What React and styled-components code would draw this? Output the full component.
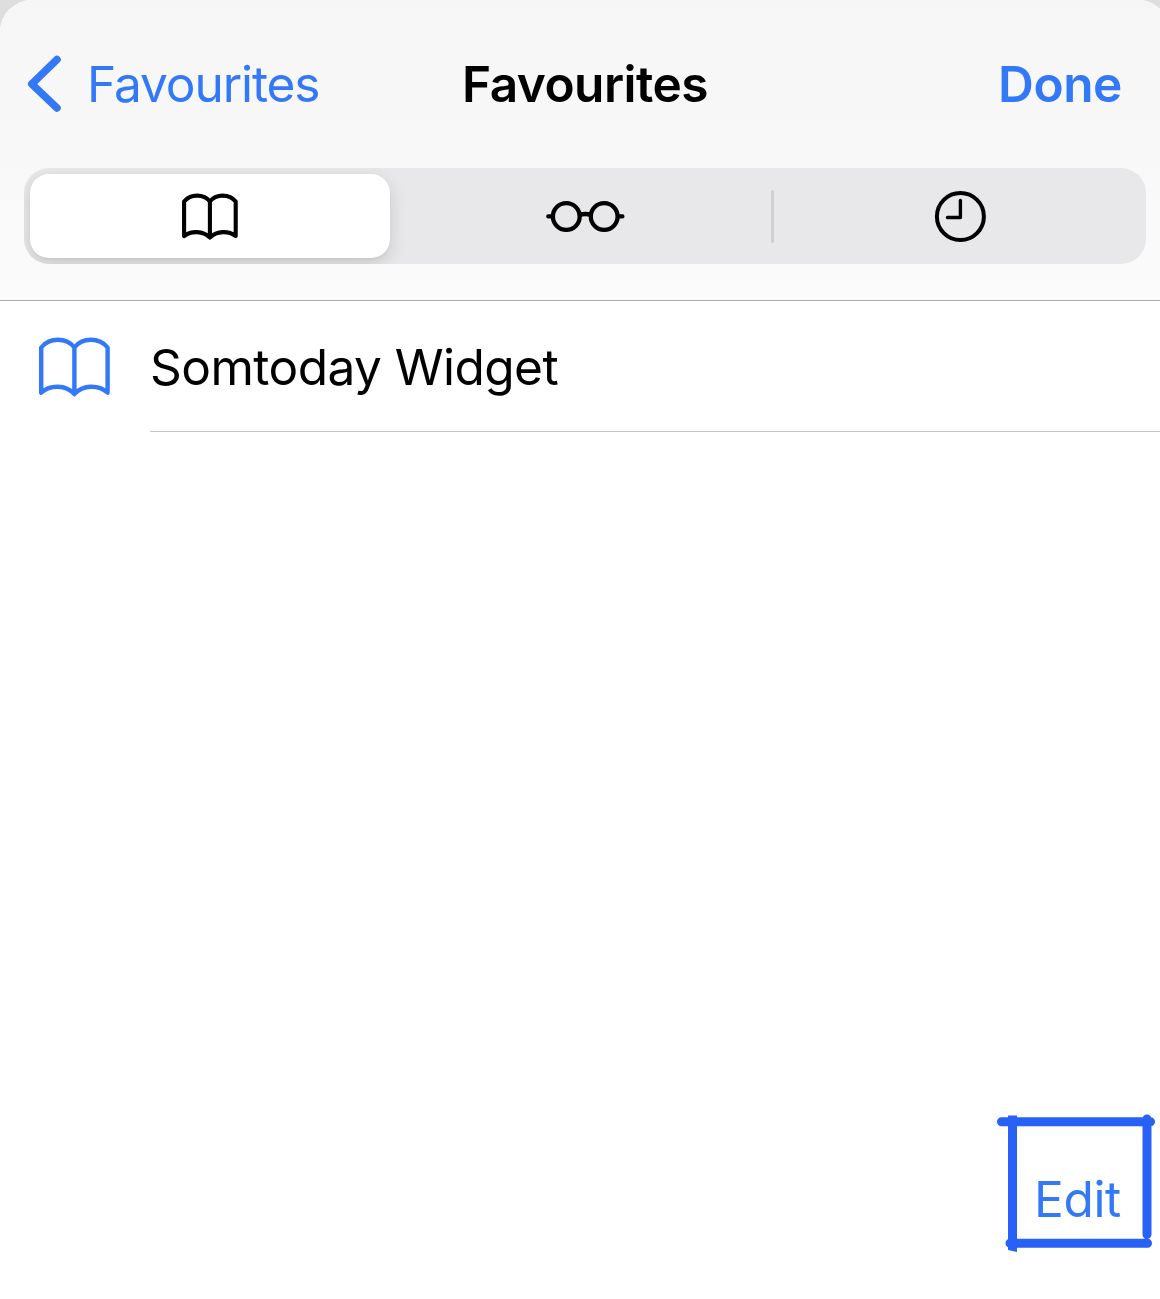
import React from "react";
import styled, { createGlobalStyle } from "styled-components";

const BLUE = "#3379f7";

const Global = createGlobalStyle`
  html, body { margin: 0; background: #dededf; overflow: hidden; }
  *, *::before, *::after { box-sizing: border-box; }
`;

const Screen = styled.div`
  width: 1160px;
  height: 1299px;
  overflow: hidden;
  font-family: Inter, "Liberation Sans", sans-serif;
  font-size: 49.6px;
  line-height: 60px;
  color: #000;
`;

const Sheet = styled.div`
  width: 1170px;
  height: 1299px;
  display: flex;
  flex-direction: column;
  background: #fff;
  border-radius: 32px 32px 0 0;
  overflow: hidden;
`;

const Header = styled.header`
  height: 301px;
  flex: none;
  background: linear-gradient(#f6f6f6, #f8f8f8 50%, #fbfbfb);
  border-bottom: 1px solid #adadaf;
`;

const NavBar = styled.nav`
  height: 168px;
  display: grid;
  grid-template-columns: 1fr auto 1fr;
  align-items: center;
  padding: 0 26px;
`;

const TextButton = styled.button`
  appearance: none;
  border: 0;
  padding: 0;
  background: none;
  font: inherit;
  font-weight: ${(p) => (p.$strong ? 600 : 400)};
  letter-spacing: ${(p) => p.$tracking || "0"};
  color: ${BLUE};
  display: flex;
  align-items: center;
  gap: 23px;
  justify-self: ${(p) => p.$side || "start"};
  margin-right: ${(p) => (p.$side === "end" ? "22px" : "0")};
  white-space: nowrap;
`;

const Title = styled.h1`
  margin: 0;
  font-size: inherit;
  font-weight: 600;
  letter-spacing: -0.55px;
`;

const Segments = styled.div`
  height: 96px;
  margin: 0 24px;
  padding-left: 6px;
  display: grid;
  grid-template-columns: 360px 9px 1fr 3px 1fr;
  align-items: center;
  background: #e8e8ea;
  border-radius: 25px;
  overflow: hidden;
`;

const Segment = styled.button`
  appearance: none;
  border: 0;
  padding: 0;
  height: 84px;
  display: flex;
  align-items: center;
  justify-content: center;
  border-radius: 19px;
  background: ${(p) => (p.$active ? "#fff" : "transparent")};
  box-shadow: ${(p) => (p.$active ? "0 6px 18px rgba(0,0,0,.14), 0 2px 2px rgba(0,0,0,.03)" : "none")};
`;

const Divider = styled.span`
  width: 3px;
  height: 53px;
  border-radius: 2px;
  background: ${(p) => (p.$hidden ? "transparent" : "#d0d0d3")};
`;

const List = styled.main`
  flex: 1;
`;

const Row = styled.div`
  height: 131px;
  display: flex;
  align-items: stretch;
`;

const RowIcon = styled.div`
  width: 150px;
  padding-left: 38px;
  display: flex;
  align-items: center;
`;

const RowLabel = styled.div`
  flex: 1;
  display: flex;
  align-items: center;
  padding-top: 1px;
  border-bottom: 1px solid #c5c5c7;
  letter-spacing: -0.57px;
`;

const Toolbar = styled.footer`
  height: 200px;
  display: flex;
  justify-content: flex-end;
  padding: 13px 12px 0 0;
`;

const EditArea = styled.div`
  position: relative;
  width: 162px;
  height: 142px;
  padding: 57px 0 0 38px;
`;

const Marker = styled.svg`
  position: absolute;
  inset: 0;
  pointer-events: none;
`;

const Drawing = styled.svg`
  display: block;
  flex: none;
  fill: none;
  stroke: currentColor;
  stroke-linecap: round;
  stroke-linejoin: round;
`;

const Chevron = () => (
  <Drawing width="38" height="62" viewBox="0 0 38 62" strokeWidth="7.5">
    <path d="M31 6.5 5.8 31 31 55" />
  </Drawing>
);

const SmallBook = () => (
  <Drawing width="58" height="50" viewBox="0 0 58 50" strokeWidth="4.1" color="#000">
    <path d="M3.1 45V10.5C9.3 2.6 23 2.6 28.9 10.5C34.8 2.6 48.5 2.6 54.7 10.5V45C47.5 39.6 36 39.6 28.9 46.6C21.8 39.6 10.3 39.6 3.1 45ZM28.9 10.5V46.6" />
  </Drawing>
);

const LargeBook = () => (
  <Drawing width="74" height="62" viewBox="0 0 74 62" strokeWidth="4.4" color={BLUE}>
    <path d="M3.2 56.7V11.5C11.3 1.2 28.6 1.2 36.4 11.5C44.2 1.2 61.5 1.2 69.6 11.5V56.7C60.5 48.6 45 48.6 36.4 58.1C27.8 48.6 12.3 48.6 3.2 56.7ZM36.4 11.5V58.1" />
  </Drawing>
);

const Glasses = () => (
  <Drawing width="80" height="34" viewBox="0 0 80 34" strokeWidth="4.3" color="#000">
    <circle cx="21.3" cy="17.5" r="13.4" />
    <circle cx="59.2" cy="17.5" r="13.4" />
    <path d="M34.8 15.7Q40.2 14.3 45.7 15.7M3.3 17.4H7M73.5 17.4H77.4" />
  </Drawing>
);

const Clock = () => (
  <Drawing width="54" height="54" viewBox="0 0 54 54" strokeWidth="4" color="#000">
    <circle cx="27.4" cy="27.5" r="23.5" />
    <path d="M27.4 11.5V28.5H14.5" strokeWidth="3.4" />
  </Drawing>
);

const EditFrame = () => (
  <Marker width="162" height="142" viewBox="0 0 162 142" fill="none" stroke="#2861f6" strokeWidth="9" strokeLinecap="round">
    <path d="M5.5 9.8H154.5M151 7V122.5M14 131.3H151.5" />
    <path d="M12 3.5H21V140L12 138Z" fill="#2861f6" stroke="none" />
  </Marker>
);

export default function App() {
  return (
    <Screen>
      <Global />
      <Sheet>
        <Header>
          <NavBar>
            <TextButton $tracking="-1.1px"><Chevron />Favourites</TextButton>
            <Title>Favourites</Title>
            <TextButton $strong $side="end" $tracking="-0.45px">Done</TextButton>
          </NavBar>
          <Segments>
            <Segment $active aria-label="Bookmarks"><SmallBook /></Segment>
            <Divider $hidden />
            <Segment aria-label="Reading list"><Glasses /></Segment>
            <Divider />
            <Segment aria-label="History"><Clock /></Segment>
          </Segments>
        </Header>
        <List>
          <Row>
            <RowIcon><LargeBook /></RowIcon>
            <RowLabel>Somtoday Widget</RowLabel>
          </Row>
        </List>
        <Toolbar>
          <EditArea>
            <TextButton $tracking="-0.4px">Edit</TextButton>
            <EditFrame />
          </EditArea>
        </Toolbar>
      </Sheet>
    </Screen>
  );
}
